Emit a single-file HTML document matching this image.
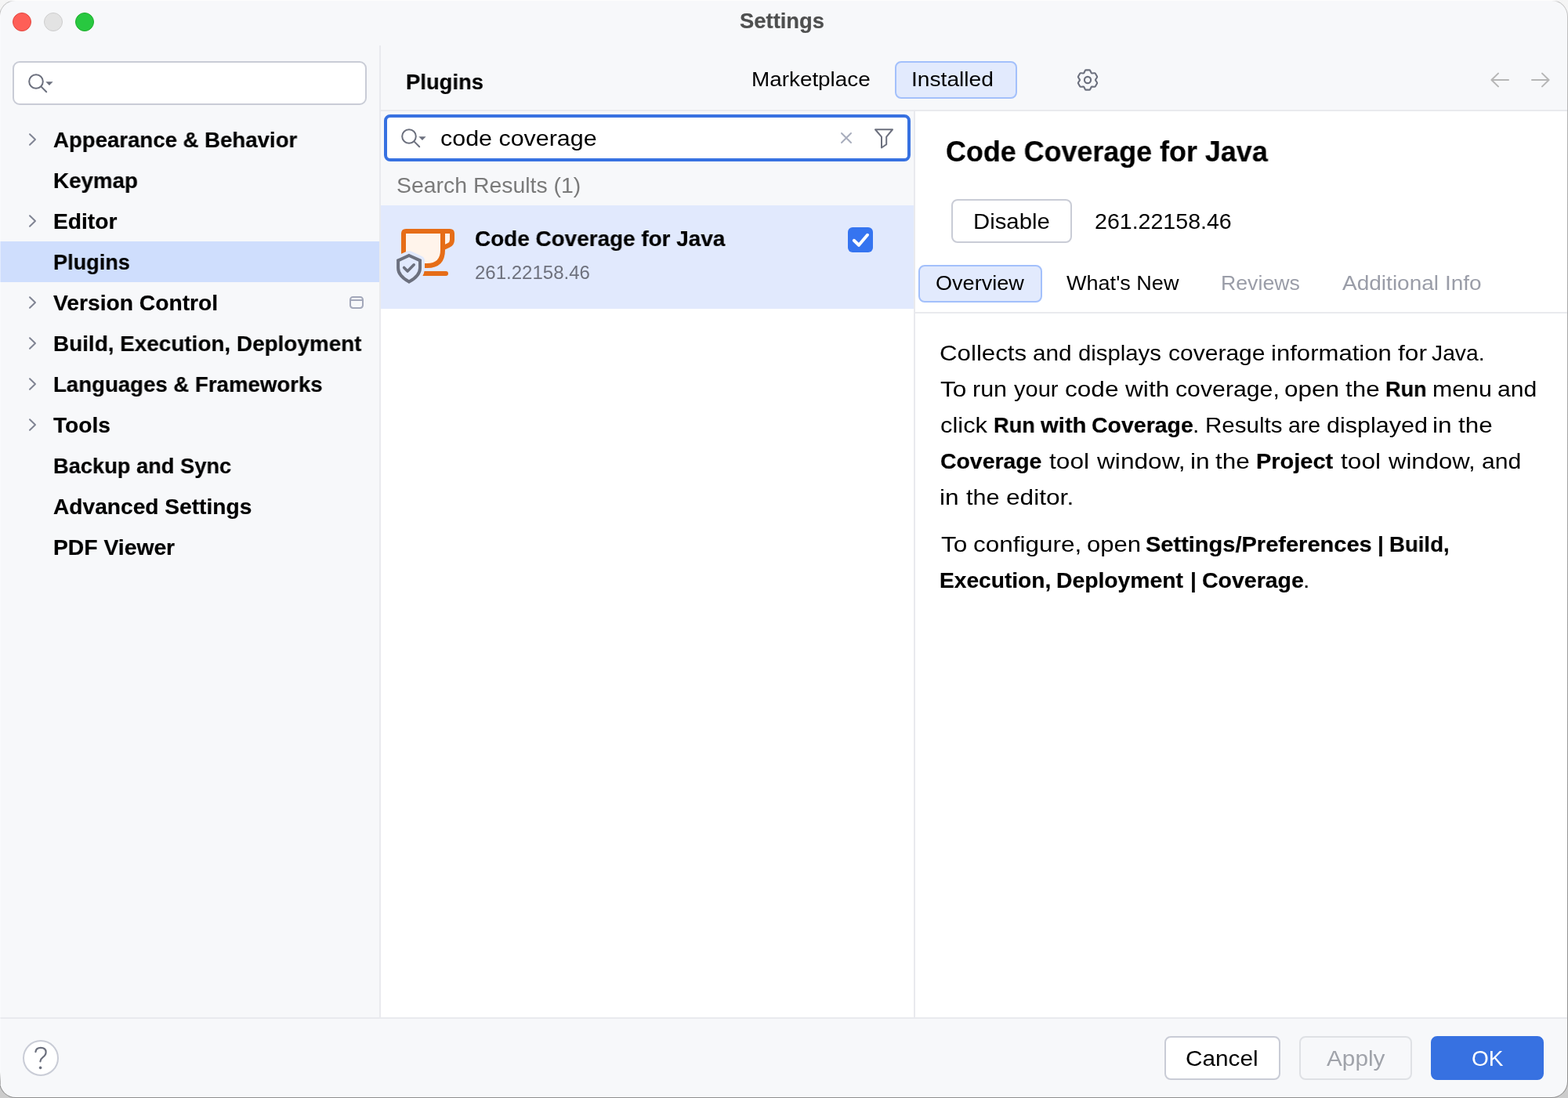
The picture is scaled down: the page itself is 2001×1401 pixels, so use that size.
<!DOCTYPE html>
<html lang="en"><head><meta charset="utf-8"><title>Settings</title>
<style>
html,body{margin:0;padding:0;background:#F5F5F5}
.screen{position:relative;width:2001px;height:1401px;overflow:hidden;font-family:"Liberation Sans",sans-serif;color:#000;background:linear-gradient(to bottom,#F5F5F5 0,#F1F1F1 60px,#CECECE 1340px,#CBCBCB 100%)}
h1,h2,h3,p,ul,li{margin:0;padding:0;font-weight:inherit;list-style:none}
.frame{position:absolute;left:-1px;top:0;width:2002px;height:1401px;border-radius:21px;background:linear-gradient(to bottom,#FDFDFD 0,#FDFDFD 1px,#C2C2C2 2px,#ADADAD 200px,#8E8E8E 100%)}
.edge{position:absolute;left:0;top:18px;width:1px;height:1366px;background:linear-gradient(to bottom,rgba(255,255,255,.4) 0,rgba(255,255,255,.4) 1350px,rgba(150,150,150,.7) 1362px,rgba(140,140,140,.8) 100%)}
.win{position:absolute;left:0;top:0;width:2001px;height:1401px;background:#F7F8FA;clip-path:inset(1px 1px 1px 0 round 20px)}
.b{position:absolute;box-sizing:border-box}
.t{position:absolute;white-space:pre;line-height:1;display:block;margin:0;font-weight:400;will-change:transform;transform-origin:0 0}
svg{position:absolute;overflow:visible}
.btn{position:absolute;box-sizing:border-box;border-radius:8px;border:2px solid #C9CCD6;background:#fff;margin:0;padding:0;font:inherit;color:inherit;appearance:none;-webkit-appearance:none;overflow:visible;text-align:left}
.tab{position:absolute;box-sizing:border-box;border-radius:8px;border:2px solid #A3C0FB;background:#E2EAFD}
</style></head>
<body>
<div class="screen">
<div class="frame"></div>
<div class="win" role="dialog" aria-label="Settings">
<header class="titlebar">
<div class="b" style="left:16px;top:16px;width:24px;height:24px;border-radius:50%;background:#FE5F57;border:1px solid #E2463F"></div>
<div class="b" style="left:56px;top:16px;width:24px;height:24px;border-radius:50%;background:#E3E3E3;border:1px solid #CDCDCD"></div>
<div class="b" style="left:96px;top:16px;width:24px;height:24px;border-radius:50%;background:#28C840;border:1px solid #1DAD2B"></div>
<h1 class="t" style="left:944.44px;top:14px;font-size:27px;transform:scaleX(1.0148);font-weight:700;-webkit-text-stroke:0.2px #4E4F4F;color:#4E4F4F;">Settings</h1>
</header>
<nav class="sidebar" aria-label="Settings categories">
<div class="b" style="left:16px;top:78px;width:452px;height:56px;border-radius:9px;border:2px solid #C9CCD6;background:#fff"></div>
<svg style="left:34.2px;top:92.4px" width="36" height="28" viewBox="-12 -12 36 28"><circle cx="0" cy="0" r="8.8" fill="none" stroke="#6C707E" stroke-width="2"/><path d="M6.6 6.6 L13.2 13.2" stroke="#6C707E" stroke-width="2" stroke-linecap="round" fill="none"/><path d="M12.3 0.3 H21.6 L16.95 4.9 Z" fill="#6C707E"/></svg>
<div class="b" style="left:0px;top:308px;width:484px;height:52px;background:#CFDEFD;"></div>
<ul>
<li><svg style="left:34px;top:166px" width="16" height="24" viewBox="0 0 16 24"><path d="M4 5.2 L11 12 L4 18.8" fill="none" stroke="#818594" stroke-width="2" stroke-linecap="round" stroke-linejoin="round"/></svg><span class="t" style="left:67.66px;top:165px;font-size:28px;transform:scaleX(0.9852);font-weight:700;-webkit-text-stroke:0.2px #000;">Appearance &amp; Behavior</span></li>
<li><span class="t" style="left:67.67px;top:217px;font-size:28px;transform:scaleX(0.9915);font-weight:700;-webkit-text-stroke:0.2px #000;">Keymap</span></li>
<li><svg style="left:34px;top:270px" width="16" height="24" viewBox="0 0 16 24"><path d="M4 5.2 L11 12 L4 18.8" fill="none" stroke="#818594" stroke-width="2" stroke-linecap="round" stroke-linejoin="round"/></svg><span class="t" style="left:67.64px;top:269px;font-size:28px;transform:scaleX(1.0070);font-weight:700;-webkit-text-stroke:0.2px #000;">Editor</span></li>
<li class="selected" aria-current="page"><span class="t" style="left:67.71px;top:321px;font-size:28px;transform:scaleX(0.9679);font-weight:700;-webkit-text-stroke:0.2px #000;">Plugins</span></li>
<li><svg style="left:34px;top:374px" width="16" height="24" viewBox="0 0 16 24"><path d="M4 5.2 L11 12 L4 18.8" fill="none" stroke="#818594" stroke-width="2" stroke-linecap="round" stroke-linejoin="round"/></svg><span class="t" style="left:68.35px;top:373px;font-size:28px;transform:scaleX(1.0080);font-weight:700;-webkit-text-stroke:0.2px #000;">Version Control</span><svg style="left:444px;top:376px" width="22" height="20" viewBox="0 0 22 20"><rect x="3" y="3" width="16" height="14" rx="3.4" fill="none" stroke="#A3A8BA" stroke-width="2"/><path d="M3 7 H19" stroke="#A3A8BA" stroke-width="2" fill="none"/></svg></li>
<li><svg style="left:34px;top:426px" width="16" height="24" viewBox="0 0 16 24"><path d="M4 5.2 L11 12 L4 18.8" fill="none" stroke="#818594" stroke-width="2" stroke-linecap="round" stroke-linejoin="round"/></svg><span class="t" style="left:67.66px;top:425px;font-size:28px;transform:scaleX(0.9957);font-weight:700;-webkit-text-stroke:0.2px #000;">Build, Execution, Deployment</span></li>
<li><svg style="left:34px;top:478px" width="16" height="24" viewBox="0 0 16 24"><path d="M4 5.2 L11 12 L4 18.8" fill="none" stroke="#818594" stroke-width="2" stroke-linecap="round" stroke-linejoin="round"/></svg><span class="t" style="left:67.68px;top:477px;font-size:28px;transform:scaleX(0.9857);font-weight:700;-webkit-text-stroke:0.2px #000;">Languages &amp; Frameworks</span></li>
<li><svg style="left:34px;top:530px" width="16" height="24" viewBox="0 0 16 24"><path d="M4 5.2 L11 12 L4 18.8" fill="none" stroke="#818594" stroke-width="2" stroke-linecap="round" stroke-linejoin="round"/></svg><span class="t" style="left:68.05px;top:529px;font-size:28px;transform:scaleX(1.0063);font-weight:700;-webkit-text-stroke:0.2px #000;">Tools</span></li>
<li><span class="t" style="left:67.70px;top:581px;font-size:28px;transform:scaleX(0.9733);font-weight:700;-webkit-text-stroke:0.2px #000;">Backup and Sync</span></li>
<li><span class="t" style="left:67.65px;top:633px;font-size:28px;transform:scaleX(1.0050);font-weight:700;-webkit-text-stroke:0.2px #000;">Advanced Settings</span></li>
<li><span class="t" style="left:67.63px;top:685px;font-size:28px;transform:scaleX(1.0103);font-weight:700;-webkit-text-stroke:0.2px #000;">PDF Viewer</span></li>
</ul>
</nav>
<div class="b" style="left:484px;top:58px;width:2px;height:1240px;background:#E9EAEE;"></div>
<div class="b" style="left:486px;top:140px;width:1514px;height:2px;background:#E9EAEE;"></div>
<div class="plugins-header">
<h2 class="t" style="left:517.79px;top:91px;font-size:28px;transform:scaleX(0.9791);font-weight:700;-webkit-text-stroke:0.2px #000;">Plugins</h2>
<span class="t" style="left:959.49px;top:88px;font-size:26px;transform:scaleX(1.0712);">Marketplace</span>
<div class="tab" role="tab" aria-selected="true" style="left:1142px;top:78px;width:156px;height:48px;"><span class="t" style="left:18.69px;top:8px;font-size:26px;transform:scaleX(1.0836);">Installed</span></div>
<svg style="left:1371.9px;top:85.9px" width="32" height="32" viewBox="-16 -16 32 32"><path d="M11.94 -3.23 Q12.32 -3.81 11.97 -4.42 L9.82 -8.16 Q9.47 -8.76 8.77 -8.72 L5.40 -8.52 Q4.90 -8.49 4.68 -8.93 L3.17 -11.95 Q2.86 -12.58 2.16 -12.58 L-2.16 -12.58 Q-2.86 -12.58 -3.17 -11.95 L-4.68 -8.93 Q-4.90 -8.49 -5.40 -8.52 L-8.77 -8.72 Q-9.47 -8.76 -9.82 -8.16 L-11.97 -4.42 Q-12.32 -3.81 -11.94 -3.23 L-10.08 -0.42 Q-9.80 -0.00 -10.08 0.42 L-11.94 3.23 Q-12.32 3.81 -11.97 4.42 L-9.82 8.16 Q-9.47 8.76 -8.77 8.72 L-5.40 8.52 Q-4.90 8.49 -4.68 8.93 L-3.17 11.95 Q-2.86 12.58 -2.16 12.58 L2.16 12.58 Q2.86 12.58 3.17 11.95 L4.68 8.93 Q4.90 8.49 5.40 8.52 L8.77 8.72 Q9.47 8.76 9.82 8.16 L11.97 4.42 Q12.32 3.81 11.94 3.23 L10.08 0.42 Q9.80 0.00 10.08 -0.42 Z" fill="none" stroke="#6C707E" stroke-width="2.1" stroke-linejoin="round"/><circle cx="0" cy="0" r="4.1" fill="none" stroke="#6C707E" stroke-width="2.1"/></svg>
<svg style="left:1900px;top:90px" width="28" height="24" viewBox="0 0 28 24"><path d="M25 12 H3.4 M12 3.6 L3.4 12 L12 20.4" fill="none" stroke="#B6B6B6" stroke-width="2" stroke-linecap="round" stroke-linejoin="round"/></svg>
<svg style="left:1952px;top:90px" width="28" height="24" viewBox="0 0 28 24"><path d="M3 12 H24.6 M16 3.6 L24.6 12 L16 20.4" fill="none" stroke="#B6B6B6" stroke-width="2" stroke-linecap="round" stroke-linejoin="round"/></svg>
</div>
<section class="plugin-list" aria-label="Installed plugins">
<div class="b" style="left:486px;top:394px;width:680px;height:904px;background:#fff;"></div>
<div class="b" style="left:486px;top:262px;width:680px;height:132px;background:#E1E9FD;"></div>
<div class="b" style="left:490px;top:146px;width:672px;height:60px;border-radius:8px;border:4px solid #3771E1;background:#fff"></div>
<svg style="left:510px;top:162px" width="36" height="28" viewBox="-12 -12 36 28"><circle cx="0" cy="0" r="8.8" fill="none" stroke="#6C707E" stroke-width="2"/><path d="M6.6 6.6 L13.2 13.2" stroke="#6C707E" stroke-width="2" stroke-linecap="round" fill="none"/><path d="M12.3 0.3 H21.6 L16.95 4.9 Z" fill="#6C707E"/></svg>
<span class="t" style="left:561.64px;top:163px;font-size:28px;transform:scaleX(1.0869);">code coverage</span>
<svg style="left:1068px;top:164px" width="24" height="24" viewBox="0 0 24 24"><path d="M6 6 L18 18 M18 6 L6 18" stroke="#A8ADBD" stroke-width="2" stroke-linecap="round" fill="none"/></svg>
<svg style="left:1112px;top:160px" width="32" height="32" viewBox="0 0 32 32"><path d="M5 5.25 H27 L19.2 14.7 V24.2 L13 28.5 V14.7 Z" fill="none" stroke="#6C707E" stroke-width="2" stroke-linejoin="round"/></svg>
<span class="t" style="left:505.93px;top:223px;font-size:28px;transform:scaleX(1.0144);color:#7A7A7A;">Search Results (1)</span>
<svg style="left:496px;top:280px" width="100" height="90" viewBox="0 0 100 90"><path d="M22 15 H78 Q81 15 81 18 V26 Q81 31 76.5 33 L69 36.5 V15" fill="#FFF4EB" stroke="#E66D17" stroke-width="6" stroke-linejoin="round"/><path d="M22 15 Q19 15 19 18 V59 H49 Q69 59 69 39 V15 Z" fill="#FFF4EB" stroke="#E66D17" stroke-width="6" stroke-linejoin="round"/><path d="M40 69 H73" stroke="#E66D17" stroke-width="6" stroke-linecap="round" fill="none"/><path d="M26 46 L40 52.4 V62 Q40 72 26 79.6 Q12.1 72 12.1 62 V52.4 Z" fill="#E1E9FD" stroke="#E1E9FD" stroke-width="12" stroke-linejoin="round"/><path d="M26 46 L40 52.4 V62 Q40 72 26 79.6 Q12.1 72 12.1 62 V52.4 Z" fill="#E1E9FD" stroke="#6C707E" stroke-width="4" stroke-linejoin="miter"/><path d="M19.6 61.5 L24.1 66 L32.2 57.8" fill="none" stroke="#6C707E" stroke-width="3.6" stroke-linecap="round" stroke-linejoin="round"/></svg>
<span class="t" style="left:605.50px;top:291px;font-size:28px;transform:scaleX(0.9961);font-weight:700;-webkit-text-stroke:0.2px #000;">Code Coverage for Java</span>
<span class="t" style="left:605.65px;top:336px;font-size:24px;transform:scaleX(1.0007);color:#6E717D;">261.22158.46</span>
<svg style="left:1082px;top:290px" width="32" height="32" viewBox="0 0 32 32"><rect x="0" y="0" width="32" height="32" rx="6" fill="#3574F0"/><path d="M7.8 16.8 L14 22.8 L25 9.8" fill="none" stroke="#fff" stroke-width="4" stroke-linecap="round" stroke-linejoin="round"/></svg>
<div class="b" style="left:1166px;top:142px;width:2px;height:1156px;background:#E9EAEE;"></div>
</section>
<article class="plugin-detail">
<div class="b" style="left:1168px;top:142px;width:832px;height:1156px;background:#fff;"></div>
<h3 class="t" style="left:1207.21px;top:176px;font-size:36px;transform:scaleX(0.9965);font-weight:700;-webkit-text-stroke:0.2px #000;">Code Coverage for Java</h3>
<button class="btn" type="button" style="left:1214px;top:254px;width:154px;height:56px;"><span class="t" style="left:26.35px;top:13px;font-size:28px;transform:scaleX(1.0467);">Disable</span></button>
<span class="t" style="left:1397.07px;top:269px;font-size:28px;transform:scaleX(1.0202);">261.22158.46</span>
<div class="tab" role="tab" aria-selected="true" style="left:1172px;top:338px;width:158px;height:48px;"><span class="t" style="left:19.80px;top:8px;font-size:26px;transform:scaleX(1.0411);">Overview</span></div>
<span class="t" style="left:1360.94px;top:348px;font-size:26px;transform:scaleX(1.0403);">What's New</span>
<span class="t" style="left:1557.69px;top:348px;font-size:26px;transform:scaleX(1.0263);color:#9A9DA8;">Reviews</span>
<span class="t" style="left:1712.50px;top:348px;font-size:26px;transform:scaleX(1.0779);color:#9A9DA8;">Additional Info</span>
<div class="b" style="left:1168px;top:398px;width:832px;height:2px;background:#E9EAEE;"></div>
<p>
<span class="t" style="left:1199.47px;top:437px;font-size:28px;transform:scaleX(1.1159);">Collects </span>
<span class="t" style="left:1318.36px;top:437px;font-size:28px;transform:scaleX(1.0623);">and </span>
<span class="t" style="left:1375.75px;top:437px;font-size:28px;transform:scaleX(1.0469);">displays </span>
<span class="t" style="left:1490.66px;top:437px;font-size:28px;transform:scaleX(1.0717);">coverage </span>
<span class="t" style="left:1621.91px;top:437px;font-size:28px;transform:scaleX(1.1104);">information </span>
<span class="t" style="left:1784.08px;top:437px;font-size:28px;transform:scaleX(1.1300);">for </span>
<span class="t" style="left:1826.96px;top:437px;font-size:28px;transform:scaleX(1.0100);">Java. </span>
<span class="t" style="left:1200.46px;top:483px;font-size:28px;transform:scaleX(1.1300);">To </span>
<span class="t" style="left:1241.22px;top:483px;font-size:28px;transform:scaleX(1.0886);">run </span>
<span class="t" style="left:1293.84px;top:483px;font-size:28px;transform:scaleX(1.0358);">your </span>
<span class="t" style="left:1358.66px;top:483px;font-size:28px;transform:scaleX(1.1273);">code </span>
<span class="t" style="left:1436.24px;top:483px;font-size:28px;transform:scaleX(1.1300);">with </span>
<span class="t" style="left:1499.64px;top:483px;font-size:28px;transform:scaleX(1.0803);">coverage, </span>
<span class="t" style="left:1638.71px;top:483px;font-size:28px;transform:scaleX(1.1252);">open </span>
<span class="t" style="left:1716.52px;top:483px;font-size:28px;transform:scaleX(1.1189);">the </span>
<b class="t" style="left:1767.72px;top:483px;font-size:28px;transform:scaleX(0.9670);font-weight:700;-webkit-text-stroke:0.2px #000;">Run </b>
<span class="t" style="left:1827.86px;top:483px;font-size:28px;transform:scaleX(1.0817);">menu </span>
<span class="t" style="left:1910.64px;top:483px;font-size:28px;transform:scaleX(1.0760);">and </span>
<span class="t" style="left:1199.77px;top:529px;font-size:28px;transform:scaleX(1.1018);">click </span>
<b class="t" style="left:1267.57px;top:529px;font-size:28px;transform:scaleX(0.9709);font-weight:700;-webkit-text-stroke:0.2px #000;">Run </b>
<b class="t" style="left:1328.08px;top:529px;font-size:28px;transform:scaleX(1.0446);font-weight:700;-webkit-text-stroke:0.2px #000;">with </b>
<b class="t" style="left:1392.78px;top:529px;font-size:28px;transform:scaleX(1.0170);font-weight:700;-webkit-text-stroke:0.2px #000;">Coverage</b>
<span class="t" style="left:1521.69px;top:529px;font-size:28px;transform:scaleX(1.0700);">. </span>
<span class="t" style="left:1537.60px;top:529px;font-size:28px;transform:scaleX(1.0539);">Results </span>
<span class="t" style="left:1643.85px;top:529px;font-size:28px;transform:scaleX(1.0179);">are </span>
<span class="t" style="left:1692.73px;top:529px;font-size:28px;transform:scaleX(1.0901);">displayed </span>
<span class="t" style="left:1827.94px;top:529px;font-size:28px;transform:scaleX(1.1300);">in </span>
<span class="t" style="left:1861.45px;top:529px;font-size:28px;transform:scaleX(1.1189);">the </span>
<b class="t" style="left:1199.88px;top:575px;font-size:28px;transform:scaleX(1.0138);font-weight:700;-webkit-text-stroke:0.2px #000;">Coverage </b>
<span class="t" style="left:1339.49px;top:575px;font-size:28px;transform:scaleX(1.1300);">tool </span>
<span class="t" style="left:1399.56px;top:575px;font-size:28px;transform:scaleX(1.1300);">window, </span>
<span class="t" style="left:1518.90px;top:575px;font-size:28px;transform:scaleX(1.1300);">in </span>
<span class="t" style="left:1551.41px;top:575px;font-size:28px;transform:scaleX(1.1241);">the </span>
<b class="t" style="left:1603.07px;top:575px;font-size:28px;transform:scaleX(1.0341);font-weight:700;-webkit-text-stroke:0.2px #000;">Project </b>
<span class="t" style="left:1711.20px;top:575px;font-size:28px;transform:scaleX(1.1300);">tool </span>
<span class="t" style="left:1772.05px;top:575px;font-size:28px;transform:scaleX(1.1098);">window, </span>
<span class="t" style="left:1890.65px;top:575px;font-size:28px;transform:scaleX(1.0760);">and </span>
<span class="t" style="left:1199.06px;top:621px;font-size:28px;transform:scaleX(1.1300);">in </span>
<span class="t" style="left:1232.58px;top:621px;font-size:28px;transform:scaleX(1.0921);">the </span>
<span class="t" style="left:1284.26px;top:621px;font-size:28px;transform:scaleX(1.1300);">editor. </span>
</p>
<p>
<span class="t" style="left:1200.66px;top:681px;font-size:28px;transform:scaleX(1.1300);">To </span>
<span class="t" style="left:1241.52px;top:681px;font-size:28px;transform:scaleX(1.1240);">configure, </span>
<span class="t" style="left:1386.67px;top:681px;font-size:28px;transform:scaleX(1.1083);">open </span>
<b class="t" style="left:1462.04px;top:681px;font-size:28px;transform:scaleX(1.0362);font-weight:700;-webkit-text-stroke:0.2px #000;">Settings/Preferences </b>
<b class="t" style="left:1758.11px;top:681px;font-size:28px;transform:scaleX(1.0000);font-weight:700;-webkit-text-stroke:0.2px #000;">| </b>
<b class="t" style="left:1772.69px;top:681px;font-size:28px;transform:scaleX(0.9846);font-weight:700;-webkit-text-stroke:0.2px #000;">Build, </b>
<b class="t" style="left:1199.33px;top:727px;font-size:28px;transform:scaleX(1.0049);font-weight:700;-webkit-text-stroke:0.2px #000;">Execution, </b>
<b class="t" style="left:1348.05px;top:727px;font-size:28px;transform:scaleX(1.0103);font-weight:700;-webkit-text-stroke:0.2px #000;">Deployment </b>
<b class="t" style="left:1519.03px;top:727px;font-size:28px;transform:scaleX(1.0000);font-weight:700;-webkit-text-stroke:0.2px #000;">| </b>
<b class="t" style="left:1533.51px;top:727px;font-size:28px;transform:scaleX(1.0170);font-weight:700;-webkit-text-stroke:0.2px #000;">Coverage</b>
<span class="t" style="left:1663.02px;top:727px;font-size:28px;transform:scaleX(1.0700);">. </span>
</p>
</article>
<footer class="buttons">
<div class="b" style="left:0px;top:1298px;width:2000px;height:2px;background:#E9EAEE;"></div>
<div class="b" style="left:29px;top:1327px;width:46px;height:46px;border-radius:50%;border:2px solid #C9CCD6;background:#fff"></div>
<svg style="left:40px;top:1332px" width="24" height="36" viewBox="0 0 24 36"><path d="M5.4 10.2 Q6 4.9 12 4.9 Q18.6 4.9 18.6 10.6 Q18.6 14.4 14.6 17.2 Q11.6 19.4 11.4 22.4" fill="none" stroke="#6C707E" stroke-width="2.2" stroke-linecap="round"/><circle cx="11.6" cy="30.4" r="1.8" fill="#6C707E"/></svg>
<button class="btn" type="button" style="left:1486px;top:1322px;width:148px;height:56px;"><span class="t" style="left:25.41px;top:13px;font-size:28px;transform:scaleX(1.0627);">Cancel</span></button>
<button class="btn" type="button" disabled style="left:1658px;top:1322px;width:144px;height:56px;background:#F7F8FA;border-color:#DFE1E5"><span class="t" style="left:32.50px;top:13px;font-size:28px;transform:scaleX(1.0629);color:#A0A3AA;">Apply</span></button>
<button class="btn" type="button" style="left:1826px;top:1322px;width:144px;height:56px;background:#3771E1;border-color:#3771E1"><span class="t" style="left:49.65px;top:13px;font-size:28px;transform:scaleX(0.9961);color:#fff;">OK</span></button>
</footer>
<div class="edge"></div>
</div>
</div>
</body></html>
